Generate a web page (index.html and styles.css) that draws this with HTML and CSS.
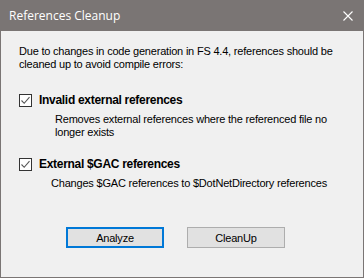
FILE: index.html
```html
<!DOCTYPE html>
<html>
<head>
    <title>References Cleanup</title>
    <link rel="stylesheet" href="styles.css">
</head>
<body>
    <div class="window">
        <div class="titlebar">
            <span class="title">References Cleanup</span>
            <svg class="close" width="10" height="10" viewBox="0 0 10 10">
                <path d="M0.5 0.5 L9.5 9.5 M9.5 0.5 L0.5 9.5" stroke="#fff" stroke-width="1.1" fill="none"/>
            </svg>
        </div>
        <div class="content">
            <p class="intro">Due to changes in code generation in FS 4.4, references should be cleaned up to avoid compile errors:</p>

            <div class="option">
                <label class="check">
                    <span class="box">
                        <svg width="11" height="11" viewBox="0 0 11 11">
                            <path d="M1.5 5.5 L4.2 8.3 L9.5 2.2" stroke="#555" stroke-width="1.1" fill="none"/>
                        </svg>
                    </span>
                    <span class="label">Invalid external references</span>
                </label>
                <p class="desc desc-1">Removes external references where the referenced file no longer exists</p>
            </div>

            <div class="option">
                <label class="check">
                    <span class="box">
                        <svg width="11" height="11" viewBox="0 0 11 11">
                            <path d="M1.5 5.5 L4.2 8.3 L9.5 2.2" stroke="#555" stroke-width="1.1" fill="none"/>
                        </svg>
                    </span>
                    <span class="label">External $GAC references</span>
                </label>
                <p class="desc desc-2">Changes $GAC references to $DotNetDirectory references</p>
            </div>

            <div class="buttons">
                <button class="btn btn-default">Analyze</button>
                <button class="btn">CleanUp</button>
            </div>
        </div>
    </div>
</body>
</html>
```

FILE: styles.css
```css
body {
    margin: 0;
    font-family: "Liberation Sans", Arial, sans-serif;
    font-size: 11px;
    letter-spacing: -0.2px;
    color: #000;
}
.window {
    width: 364px;
    height: 278px;
    box-sizing: border-box;
    border: 1px solid #7a7574;
    border-top: none;
    background: #f0f0f0;
}
.titlebar {
    height: 31px;
    background: #7a7574;
    display: flex;
    align-items: center;
    justify-content: space-between;
    padding: 0 10px 0 8px;
}
.title {
    color: #fff;
    font-family: "Open Sans", "Noto Sans", sans-serif;
    font-size: 12px;
    letter-spacing: 0;
}
.close {
    display: block;
}
.content {
    padding: 14px 18px 0 18px;
}
.intro {
    margin: 0;
    line-height: 13px;
}
.option {
    margin-top: 22px;
}
.option + .option {
    margin-top: 18px;
}
.check {
    display: flex;
    align-items: center;
    gap: 7px;
}
.box {
    width: 13px;
    height: 13px;
    box-sizing: border-box;
    border: 1px solid #333;
    background: #fff;
    display: flex;
    align-items: center;
    justify-content: center;
}
.label {
    font-weight: bold;
    font-size: 12px;
    letter-spacing: -0.3px;
}
.desc {
    margin: 6px 0 0;
    line-height: 13px;
}
.desc-1 {
    padding-left: 36px;
}
.desc-2 {
    padding-left: 32px;
}
.buttons {
    display: flex;
    gap: 23px;
    margin-top: 37px;
    padding-left: 47px;
}
.btn {
    width: 98px;
    height: 21px;
    background: #e1e1e1;
    border: 1px solid #adadad;
    font-family: "Liberation Sans", Arial, sans-serif;
    font-size: 11px;
    letter-spacing: -0.2px;
    padding: 0;
}
.btn-default {
    border: 2px solid #0078d7;
}
```
